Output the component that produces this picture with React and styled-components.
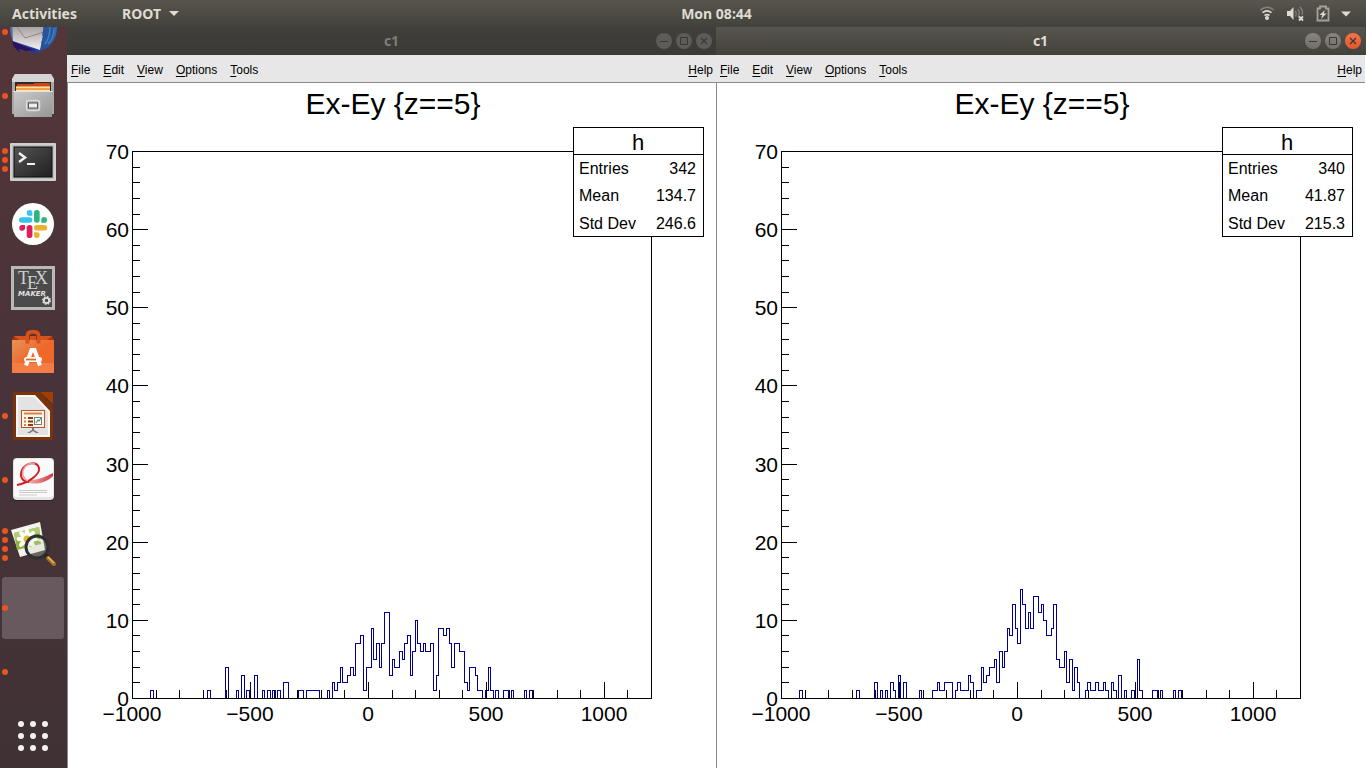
import styled, { createGlobalStyle } from 'styled-components';

const GlobalStyle = createGlobalStyle`
  * {
    box-sizing: border-box;
  }
  body {
    margin: 0;
    background: #3c3b37;
  }
  button {
    border: 0;
    padding: 0;
    margin: 0;
    background: none;
    font: inherit;
    color: inherit;
  }
  svg {
    display: block;
  }
`;

const Desktop = styled.div`
  display: flex;
  flex-direction: column;
  height: 100vh;
  overflow: hidden;
`;

const TopBar = styled.header`
  display: flex;
  align-items: center;
  flex: 0 0 27px;
  background: linear-gradient(#57554d, #42413b);
  color: #dfdbd2;
  font-family: 'Noto Sans', 'Open Sans', sans-serif;
  font-size: 14px;
  font-weight: 700;
  line-height: 26px;
`;

const TopLeft = styled.div`
  display: flex;
  flex: 1 1 80px;
  gap: 45px;
  padding-left: 12px;
`;

const TopRight = styled.div`
  display: flex;
  flex: 1 1 0;
  justify-content: flex-end;
  padding-right: 13px;
`;

const PanelButton = styled.button`
  display: flex;
  align-items: center;
  gap: 8px;
`;

const Body = styled.div`
  display: flex;
  flex: 1;
  min-height: 0;
`;

const DockBar = styled.nav`
  display: flex;
  flex-direction: column;
  justify-content: flex-end;
  flex: 0 0 67px;
  overflow: hidden;
  background: linear-gradient(#533639, #48333a 50%, #403234);
`;

const DockTile = styled.button`
  display: flex;
  align-items: center;
  flex: 0 0 62px;
  width: 62px;
  margin: 1px 2px;
  padding-right: 6px;
  border-radius: 3px;
  background: ${({ $active }) => ($active ? '#68595e' : 'transparent')};
`;

const Dots = styled.span`
  display: flex;
  flex-direction: column;
  gap: 3px;
  flex: 0 0 6px;
`;

const Dot = styled.span`
  width: 6px;
  height: 6px;
  border-radius: 50%;
  background: #e95420;
`;

const IconBox = styled.span`
  display: flex;
  justify-content: center;
  flex: 1;
`;

const Workspace = styled.main`
  display: flex;
  flex: 1;
  min-width: 0;
  padding-right: 1px;
  background: linear-gradient(#4a4943 28px, #ffffff 28px);
`;

const Frame = styled.section`
  display: flex;
  flex-direction: column;
  flex: 1 1 0;
  min-width: 0;
`;

const TitleBar = styled.div`
  display: grid;
  grid-template-columns: 1fr auto 1fr;
  align-items: center;
  flex: 0 0 28px;
  padding: 0 4px;
  background: ${({ $active }) =>
    $active ? 'linear-gradient(#57554d, #42413b)' : 'linear-gradient(#403f3b, #3b3a36)'};
  color: ${({ $active }) => ($active ? '#dfdbd2' : '#807d78')};
  font-family: 'Noto Sans', 'Open Sans', sans-serif;
  font-size: 14px;
  font-weight: 700;
  line-height: 26px;
`;

const WindowTitle = styled.span`
  grid-column: 2;
`;

const Controls = styled.div`
  display: flex;
  justify-content: flex-end;
  gap: 4px;
`;

const Control = styled.button`
  width: 16px;
  height: 16px;
  border-radius: 50%;
  background: ${({ $active, $close }) => {
    if (!$active) return '#5e5c58';
    return $close ? 'linear-gradient(#f4734a, #e4572a)' : 'linear-gradient(#87857e, #716f68)';
  }};
  color: #3a3935;
`;

const MenuBar = styled.div`
  display: flex;
  gap: 13px;
  flex: 0 0 28px;
  padding: 2px 3px 0 4px;
  border-bottom: 1px solid #8a8a8a;
  background: #e7e7e7;
`;

const MenuItem = styled.button`
  font-family: 'Liberation Sans', Arial, sans-serif;
  font-size: 12px;
  color: #000000;
  margin-left: ${({ $end }) => ($end ? 'auto' : '0')};
`;

const Mnemonic = styled.span`
  text-decoration: underline;
  text-underline-offset: 2px;
`;

const Canvas = styled.div`
  flex: 1;
  min-height: 0;
  border-left: 1px solid #8a8a8a;
  background: #ffffff;
`;

const Plot = styled.svg`
  width: 100%;
  height: 100%;
  font-family: 'Liberation Sans', Arial, sans-serif;
`;

const BINS = 200;
const LEFT = 64;
const RIGHT = 583;
const TOP = 68;
const BOTTOM = 615;

// [first bin, contents of consecutive bins]
const leftRuns = [
  [7, [1]], [29, [1]], [36, [4]], [40, [1]], [42, [3]], [44, [1]], [47, [3]],
  [50, [1]], [52, [1]], [54, [1]], [56, [1]], [58, [2, 2]], [64, [1, 1]],
  [67, [1, 1, 1, 1, 1]], [75, [1]],
  [77, [2, 1, 2, 4, 2, 2, 3, 4, 3, 7, 7, 8, 1, 4, 4, 9, 5, 7, 4, 7, 11, 11, 3,
    5, 4, 4, 6, 5, 7, 8, 3, 6, 10, 7, 6, 7, 6, 6, 7, 1, 3, 9, 9, 8, 9, 7, 4,
    7, 7, 6, 6, 2, 1, 4, 4, 3, 1, 1]],
  [136, [1, 4, 1]], [140, [1]], [143, [1, 1]], [146, [1]], [151, [1]], [153, [1]],
];

const rightRuns = [
  [7, [1]], [29, [1]], [36, [2]], [38, [1]], [40, [1]], [42, [2, 1]], [45, [3]],
  [47, [2]], [53, [1]], [58, [1, 1, 2, 1, 1, 2, 2, 2]],
  [67, [1, 2, 1, 1, 1, 3, 2]],
  [75, [1, 1, 4, 2, 3, 4, 4, 5, 2, 6, 4, 6, 9, 8, 12, 9, 7, 14, 12, 9, 11, 9,
    13, 13, 11, 12, 10, 8, 8, 9, 12, 5, 4, 4, 6, 2, 5, 1, 4, 2]],
  [117, [1, 2, 1, 1, 2, 1, 1, 2, 1]], [127, [2, 1]], [130, [3]], [132, [1]],
  [135, [1]], [137, [5, 1]], [143, [1, 1]], [146, [1]], [151, [1]], [153, [1]],
];

const binX = (bin) => Math.round(LEFT + (bin * (RIGHT - LEFT)) / BINS) + 0.5;
const valueX = (value) => Math.round(LEFT + ((value + 1000) * (RIGHT - LEFT)) / 2200) + 0.5;
const countY = (count) => Math.round(BOTTOM - (count * (BOTTOM - TOP)) / 70) + 0.5;

const outline = (runs) => {
  const bins = new Array(BINS).fill(0);
  runs.forEach(([start, counts]) => counts.forEach((c, i) => { bins[start + i] = c; }));
  let d = `M${binX(0)} ${countY(0)}`;
  bins.forEach((count, i) => {
    d += `V${countY(count)}H${binX(i + 1)}`;
  });
  return d;
};

const range = (from, to, step) => {
  const list = [];
  for (let v = from; v <= to; v += step) list.push(v);
  return list;
};

const statY = (row) => 91 + Math.floor(row * 27.5);

const Histogram = ({ runs, stats }) => (
  <Plot viewBox="0 0 648 685" preserveAspectRatio="xMidYMin meet" role="img" aria-label="Ex-Ey {z==5}">
    <text x="325" y="31" fontSize="30" textAnchor="middle">{'Ex-Ey {z==5}'}</text>
    <g fill="none" shapeRendering="crispEdges">
      <path d={outline(runs)} stroke="#000099" />
      <g stroke="#000000">
        <rect x={LEFT + 0.5} y={TOP + 0.5} width={RIGHT - LEFT} height={BOTTOM - TOP} />
        {range(0, 70, 2).map((v) => (
          <path key={v} d={`M${LEFT} ${countY(v)}h${v % 10 ? 8 : 16}`} />
        ))}
        {range(-1000, 1200, 100).map((v) => (
          <path key={v} d={`M${valueX(v)} ${BOTTOM}v${v % 500 ? -8 : -16}`} />
        ))}
      </g>
    </g>
    <g fontSize="21">
      {range(0, 70, 10).map((v) => (
        <text key={v} x="61" y={Math.round(countY(v)) + 7} textAnchor="end">{v}</text>
      ))}
      {range(-1000, 1000, 500).map((v) => (
        <text key={v} x={Math.floor(valueX(v))} y="638" textAnchor="middle">
          {String(v).replace('-', '−')}
        </text>
      ))}
    </g>
    <g shapeRendering="crispEdges" stroke="#000000">
      <rect x="505.5" y="44.5" width="130" height="109" fill="#ffffff" />
      <path d="M505 71.5h131" />
    </g>
    <text x="570" y="67" fontSize="22" textAnchor="middle">h</text>
    <g fontSize="16">
      {stats.map(([name, value], i) => (
        <g key={name}>
          <text x="511" y={statY(i)}>{name}</text>
          <text x="628" y={statY(i)} textAnchor="end">{value}</text>
        </g>
      ))}
    </g>
  </Plot>
);

const MinimizeGlyph = () => (
  <svg width="16" height="16" fill="none" stroke="currentColor"><path d="M4 8.5h8" /></svg>
);

const MaximizeGlyph = () => (
  <svg width="16" height="16" fill="none" stroke="currentColor"><path d="M4.5 4.5h7v7h-7z" /></svg>
);

const CloseGlyph = () => (
  <svg width="16" height="16" fill="none" stroke="currentColor" strokeWidth="1.3">
    <path d="M5 5l6 6M11 5l-6 6" />
  </svg>
);

const Menu = ({ children, end }) => (
  <MenuItem $end={end}>
    <Mnemonic>{children[0]}</Mnemonic>{children.slice(1)}
  </MenuItem>
);

const RootWindow = ({ active, runs, stats }) => (
  <Frame>
    <TitleBar $active={active}>
      <WindowTitle>c1</WindowTitle>
      <Controls>
        <Control $active={active} aria-label="Minimize"><MinimizeGlyph /></Control>
        <Control $active={active} aria-label="Maximize"><MaximizeGlyph /></Control>
        <Control $active={active} $close aria-label="Close"><CloseGlyph /></Control>
      </Controls>
    </TitleBar>
    <MenuBar>
      <Menu>File</Menu>
      <Menu>Edit</Menu>
      <Menu>View</Menu>
      <Menu>Options</Menu>
      <Menu>Tools</Menu>
      <Menu end>Help</Menu>
    </MenuBar>
    <Canvas>
      <Histogram runs={runs} stats={stats} />
    </Canvas>
  </Frame>
);

const Caret = () => (
  <svg width="10" height="5" fill="currentColor"><path d="M0 0h10L5 5z" /></svg>
);

const StatusIcons = () => (
  <svg width="93" height="20" viewBox="0 0 93 20" fill="none">
    <g stroke="#dfdbd2" strokeWidth="1.6">
      <path d="M0.500 6c4-3.600 9-3.600 13 0" stroke="#85837c" />
      <path d="M2.500 8.700c3-2.400 6-2.400 9 0" />
      <path d="M4.500 11.500c2-1.500 3-1.500 5 0" />
    </g>
    <circle cx="7" cy="14" r="2" fill="#dfdbd2" />
    <path d="M27 7h3l3.500-4v13l-3.500-4h-3z" fill="#dfdbd2" />
    <path d="M35.500 7q1.500 3 0 5.500M38 5q2.500 4.500 0 8M40 3q3.500 4 2 8" stroke="#85837c" strokeWidth="1.300" />
    <path d="M39 12.500l4 4M43 12.500l-4 4" stroke="#dfdbd2" strokeWidth="1.800" />
    <path d="M60 4.500V2.500h6v2h2.500v12h-11v-12z" stroke="#a5a29b" strokeWidth="1.800" />
    <path d="M65 6l-5.500 5h2.800l-1.300 4 5.500-5.500h-2.800z" fill="#dfdbd2" />
    <path d="M81 7.500h10l-5 5z" fill="#dfdbd2" />
  </svg>
);

const Thunderbird = () => (
  <svg width="48" height="48" viewBox="0 0 48 48">
    <defs>
      <linearGradient id="bird" x1="0" x2="1" y2="0">
        <stop offset="0" stopColor="#5a70a8" />
        <stop offset="0.5" stopColor="#24329a" />
        <stop offset="1" stopColor="#2f6fb8" />
      </linearGradient>
      <linearGradient id="letter" x1="0" x2="0" y2="1">
        <stop offset="0.3" stopColor="#aca4a4" />
        <stop offset="1" stopColor="#f2f0ef" />
      </linearGradient>
    </defs>
    <path d="M1 18h47c0 12-5 21-16 25l-7 4 2-3-8 1 3-3-10-1 3 3C6 40 1 32 1 18z" fill="url(#bird)" />
    <path d="M3 33l10 4 12 5-8 1-7-2 1 3c-4-2-7-6-8-11z" fill="#2a1263" />
    <path d="M3 10h32l-1 17-3 15L4 33z" fill="url(#letter)" />
    <path d="M8 19l8 11 19-6" fill="none" stroke="#8d8684" />
    <path d="M35 17l-2 11 2-1-3 8 3-1-4 8c11-3 15-12 15-24z" fill="#29539c" />
    <path d="M41 19c0 7-1 12-5 17M45 20c0 7-2 12-6 16" stroke="#3f82bd" strokeWidth="1.500" fill="none" />
  </svg>
);

const Files = () => (
  <svg width="48" height="48" viewBox="0 0 48 48">
    <defs>
      <linearGradient id="cabinet" x1="0" x2="1" y2="1">
        <stop offset="0" stopColor="#c9c9c9" />
        <stop offset="1" stopColor="#969696" />
      </linearGradient>
    </defs>
    <path d="M6 2h36l3 5v35H3V7z" fill="#a8a8a8" />
    <path d="M6 2h36l3 5v3H3V7z" fill="#d4d4d4" />
    <path d="M6 10h36v10H6z" fill="#2b2b2b" />
    <path d="M8 12h16l2-1h15v9H8z" fill="#c9461c" />
    <path d="M7 14h34v6H7z" fill="#f2a04c" />
    <path d="M7 15h34v1H7zM7 18h34v1H7z" fill="#ffdfae" />
    <path d="M5 20h38v25H5z" fill="url(#cabinet)" />
    <path d="M4 19.500h40" stroke="#e5e5e5" />
    <rect x="17.500" y="28.500" width="13" height="10" rx="2" fill="#ababab" stroke="#dcdcdc" strokeWidth="1.500" />
    <rect x="19.500" y="31" width="9" height="5" fill="#ededed" stroke="#555555" />
  </svg>
);

const Terminal = () => (
  <svg width="48" height="48" viewBox="0 0 48 48">
    <defs>
      <linearGradient id="screen" x1="0" x2="1" y2="1">
        <stop offset="0" stopColor="#555555" />
        <stop offset="0.5" stopColor="#3a3a3a" />
        <stop offset="1" stopColor="#1f1f1f" />
      </linearGradient>
    </defs>
    <rect x="1" y="7" width="46" height="38" rx="1" fill="#bdbdbd" />
    <rect x="2" y="8" width="44" height="36" fill="none" stroke="#e2e2e2" />
    <rect x="5" y="11" width="38" height="30" fill="url(#screen)" stroke="#0c0c0c" />
    <path d="M10 17l6 4.500-6 4.500" fill="none" stroke="#f0f0f0" strokeWidth="2.500" />
    <path d="M18 28h8" stroke="#f0f0f0" strokeWidth="2" />
  </svg>
);

const Slack = () => (
  <svg width="48" height="48" viewBox="0 0 48 48">
    <circle cx="24" cy="24" r="21" fill="#ffffff" />
    <rect x="10" y="17.300" width="13.400" height="5.500" rx="2.750" fill="#36c5f0" />
    <path d="M23.400 15.800h-2.800a2.850 2.850 0 1 1 2.800-2.900z" fill="#36c5f0" />
    <rect x="25" y="10" width="5.700" height="12.800" rx="2.800" fill="#2eb67d" />
    <path d="M32.300 22.800v-2.800a2.850 2.850 0 1 1 2.900 2.800z" fill="#2eb67d" />
    <rect x="25" y="25" width="13.200" height="5.600" rx="2.800" fill="#ecb22e" />
    <path d="M25 32.300h2.800a2.850 2.850 0 1 1-2.800 2.900z" fill="#ecb22e" />
    <rect x="17.700" y="25" width="5.700" height="13" rx="2.800" fill="#e01e5a" />
    <path d="M16 25v2.800a2.850 2.850 0 1 1-2.900-2.800z" fill="#e01e5a" />
  </svg>
);

const TexMaker = () => (
  <svg width="48" height="48" viewBox="0 0 48 48">
    <rect x="2" y="2" width="44" height="44" fill="#b9b9b9" />
    <rect x="5" y="5" width="38" height="38" fill="#4b4b4b" />
    <g fill="#cfcfcf" fontFamily="Liberation Serif, serif" fontSize="18">
      <text x="9" y="20">T</text>
      <text x="18" y="25">E</text>
      <text x="26" y="20">X</text>
    </g>
    <text x="9" y="32" fill="#e0e0e0" fontFamily="DejaVu Sans, sans-serif" fontSize="7" fontWeight="700" fontStyle="italic">MAKER</text>
    <circle cx="37.500" cy="36.500" r="2.700" fill="none" stroke="#e0e0e0" strokeWidth="1.800" />
    <circle cx="37.500" cy="36.500" r="3.900" fill="none" stroke="#e0e0e0" strokeWidth="1.200" strokeDasharray="1.600 1.460" />
  </svg>
);

const Software = () => (
  <svg width="48" height="48" viewBox="0 0 48 48">
    <defs>
      <linearGradient id="bag" x1="0" x2="1" y2="1">
        <stop offset="0" stopColor="#e39459" />
        <stop offset="0.5" stopColor="#f0672a" />
      </linearGradient>
    </defs>
    <path d="M3 12l2-4h38l2 4z" fill="#a5380f" />
    <path d="M5 8l5 4h28l5-4z" fill="#d4541f" />
    <path d="M3 12h42v33H3z" fill="url(#bag)" />
    <path d="M3 35h42v10H3z" fill="#f47c45" />
    <path d="M18.500 15.500V8q0-4 4-4h3q4 0 4 4v7.500" fill="none" stroke="#d9501f" strokeWidth="4" />
    <path d="M20.500 12V8q0-2 2-2h3q2 0 2 2v4" fill="none" stroke="#9f3510" />
    <path d="M17 37.500l5.500-15.500h3l5.500 15.500" fill="none" stroke="#ffffff" strokeWidth="4" />
    <rect x="15" y="29" width="18" height="5" rx="2.500" fill="#ffffff" />
    <path d="M17 31.500h10" stroke="#e8681c" strokeWidth="1.800" />
  </svg>
);

const Impress = () => (
  <svg width="48" height="48" viewBox="0 0 48 48">
    <path d="M6 0h24l14 14v32q0 2-2 2H6q-2 0-2-2V2q0-2 2-2z" fill="#7c3208" />
    <path d="M7 3h19l15 16v26H7z" fill="#f7f7f7" />
    <path d="M9 5h16l14 15v23H9z" fill="#e3e3e3" />
    <path d="M31 0h13v12z" fill="#a33e03" />
    <rect x="12.500" y="18.500" width="23" height="17" fill="#fdf5ee" stroke="#b75421" />
    <path d="M15 21.500h18" stroke="#d98048" strokeWidth="2" />
    <g strokeWidth="2">
      <path d="M15 26h2M15 29.500h2M15 33h2" stroke="#d98048" />
      <path d="M19 26h5M19 29.500h5M19 33h5" stroke="#8a3c10" />
    </g>
    <rect x="25.500" y="25.500" width="7" height="7" fill="#ffffff" stroke="#7c7c7c" />
    <path d="M27 31l2-3 1 1 2-3" fill="none" stroke="#3aa655" strokeWidth="1.200" />
    <path d="M23 36h2v2l5 3h-3l-3-2-3 2h-3l5-3z" fill="#777777" />
  </svg>
);

const Evince = () => (
  <svg width="48" height="48" viewBox="0 0 48 48">
    <defs>
      <linearGradient id="ribbon" x1="0" x2="1" y2="0">
        <stop offset="0" stopColor="#f3b5b5" />
        <stop offset="1" stopColor="#d23a42" />
      </linearGradient>
    </defs>
    <rect x="4" y="3" width="41" height="42" rx="4" fill="#2c2225" />
    <rect x="4" y="2" width="41" height="42" rx="4" fill="#e4e4e4" />
    <rect x="5" y="3" width="39" height="38" rx="3" fill="#fafafa" />
    <path d="M18 24c9 1 18-3 26-7v3c-6 6-15 9-24 7z" fill="url(#ribbon)" />
    <path d="M8 29c11-2 23-10 22-17-2-7-13-6-17 2-3 7 1 12 7 12" fill="none" stroke="#cf2028" strokeWidth="2" />
    <path d="M26 8c-5-2-10 1-12 6-1 5 1 9 5 11" fill="none" stroke="#ec9a9c" strokeWidth="1.500" />
    <path d="M10 34.500h28M10 36.500h28M10 39h18" stroke="#c9c9c9" />
  </svg>
);

const ImageViewer = () => (
  <svg width="48" height="48" viewBox="0 0 48 48">
    <path d="M2 10l29-8 5 28-25 7z" fill="#f4f4f0" />
    <path d="M5 13l25-6 2 17-24 6z" fill="#8fb43f" />
    <path d="M5 13l25-6 1 6-25 6z" fill="#b3cc74" />
    <g fill="#ffffff">
      {range(0, 315, 45).map((angle) => (
        <ellipse key={angle} cx="18" cy="13" rx="2.300" ry="4.500" transform={`rotate(${angle} 18 19)`} />
      ))}
    </g>
    <circle cx="18" cy="19" r="3.500" fill="#e8b727" />
    <circle cx="28" cy="27" r="11" fill="#c9cfb4" fillOpacity="0.3" stroke="#2b3034" strokeWidth="3" />
    <path d="M21 26c1-5 6-8 11-5" fill="none" stroke="#ffffff" strokeOpacity="0.8" strokeWidth="1.500" />
    <path d="M36 35l4 4" stroke="#25282b" strokeWidth="4" />
    <path d="M39 38l6 6" stroke="#a9701e" strokeWidth="4" strokeLinecap="round" />
    <path d="M39 37l6 6" stroke="#edc07a" strokeWidth="1.200" />
  </svg>
);

const AppGrid = () => (
  <svg width="48" height="48" viewBox="0 0 48 48" fill="#f2f2f2">
    {[12, 24, 36].map((y) => [12, 24, 36].map((x) => <circle key={`${x}-${y}`} cx={x} cy={y} r="3" />))}
  </svg>
);

const dockItems = [
  { name: 'Thunderbird Mail', icon: Thunderbird, windows: 1 },
  { name: 'Files', icon: Files, windows: 1 },
  { name: 'Terminal', icon: Terminal, windows: 3 },
  { name: 'Slack', icon: Slack, windows: 0 },
  { name: 'Texmaker', icon: TexMaker, windows: 0 },
  { name: 'Ubuntu Software', icon: Software, windows: 0 },
  { name: 'LibreOffice Impress', icon: Impress, windows: 1 },
  { name: 'Document Viewer', icon: Evince, windows: 1 },
  { name: 'Image Viewer', icon: ImageViewer, windows: 4 },
  { name: 'ROOT', windows: 1, active: true },
  { name: 'ROOT Browser', windows: 1 },
  { name: 'Show Applications', icon: AppGrid, windows: 0 },
];

const Dock = () => (
  <DockBar>
    {dockItems.map(({ name, icon: Icon, windows, active }) => (
      <DockTile key={name} $active={active} aria-label={name}>
        <Dots>
          {range(1, windows, 1).map((n) => <Dot key={n} />)}
        </Dots>
        <IconBox>{Icon && <Icon />}</IconBox>
      </DockTile>
    ))}
  </DockBar>
);

export default function App() {
  return (
    <Desktop>
      <GlobalStyle />
      <TopBar>
        <TopLeft>
          <PanelButton>Activities</PanelButton>
          <PanelButton>ROOT <Caret /></PanelButton>
        </TopLeft>
        <PanelButton>Mon 08:44</PanelButton>
        <TopRight>
          <PanelButton aria-label="System menu"><StatusIcons /></PanelButton>
        </TopRight>
      </TopBar>
      <Body>
        <Dock />
        <Workspace>
          <RootWindow
            runs={leftRuns}
            stats={[['Entries', '342'], ['Mean', '134.7'], ['Std Dev', '246.6']]}
          />
          <RootWindow
            active
            runs={rightRuns}
            stats={[['Entries', '340'], ['Mean', '41.87'], ['Std Dev', '215.3']]}
          />
        </Workspace>
      </Body>
    </Desktop>
  );
}
